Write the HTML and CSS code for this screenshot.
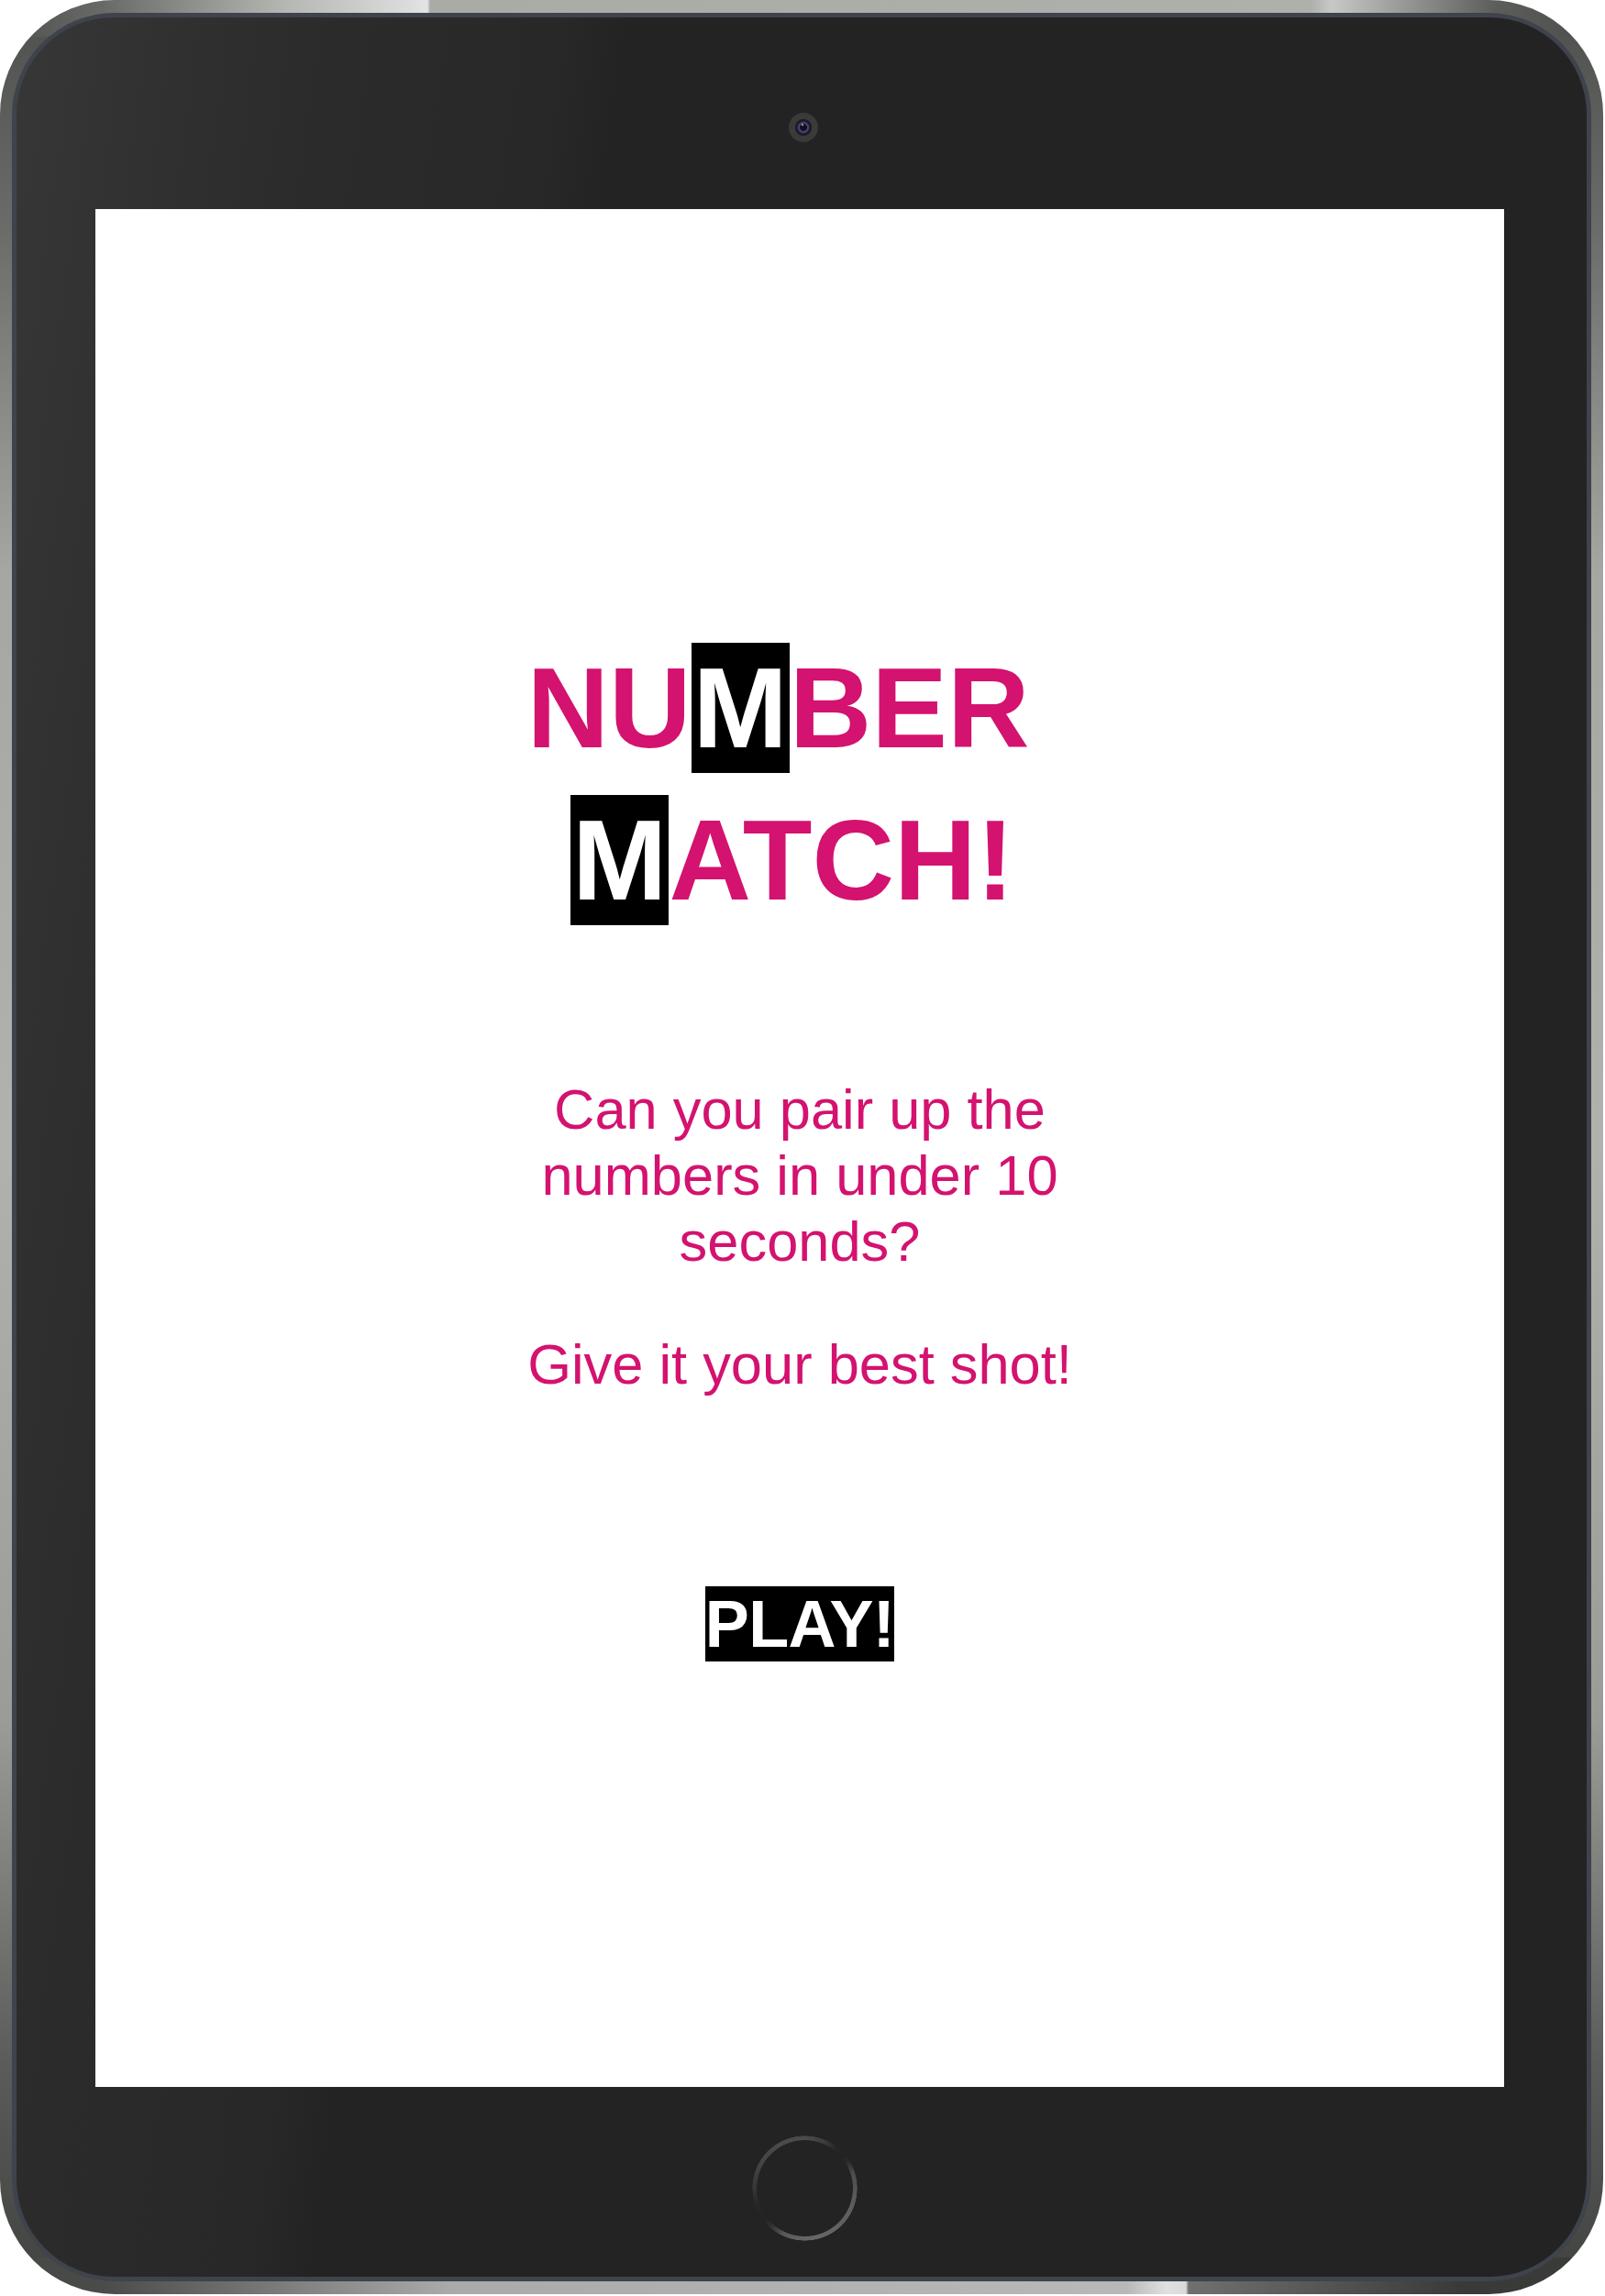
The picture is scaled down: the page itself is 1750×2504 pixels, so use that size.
FILE: index.html
```html
<!DOCTYPE html>
<html lang="en">
<head>
<meta charset="utf-8">
<title>Number Match!</title>
<link rel="stylesheet" href="styles.css">
</head>
<body>
<div class="device">
  <div class="rim">
    <div class="bezel">
      <div class="camera"></div>
      <main class="screen">
        <h1 class="title">
          <span class="title-line line-1">NU<span class="tile">M</span>BER</span>
          <span class="title-line line-2"><span class="tile">M</span>ATCH!</span>
        </h1>
        <div class="intro">
          <p>Can you pair up the numbers in under 10 seconds?</p>
          <p>Give it your best shot!</p>
        </div>
        <button class="play" type="button">PLAY!</button>
      </main>
      <div class="home"></div>
    </div>
  </div>
</div>
</body>
</html>
```
FILE: styles.css
```css
html, body {
  margin: 0;
  padding: 0;
  background: #ffffff;
}

.device {
  box-sizing: border-box;
  width: 1748px;
  height: 2502px;
  padding: 14px 13px;
  border-radius: 125px;
  background:
    linear-gradient(to right, #4e504e 0, #686a67 112px, #b5b7b3 312px, #dcdcdc 446px, #e4e4e4 466px, #a9aba7 469px, #aeb0ac 1429px, #c8c8c6 1451px, #5c5e5b 1630px, #4a4c49 100%) top / 100% 40px no-repeat,
    linear-gradient(to right, #454744 0, #4a4c49 112px, #aaaaaa 491px, #b8b8b8 1228px, #e0e0e0 1272px, #dadada 1293px, #6f716e 1296px, #383a37 1596px, #3a3c39 100%) bottom / 100% 40px no-repeat,
    linear-gradient(to bottom, #4d4f4c 0, #6a6c69 10%, #a5a7a3 25%, #b0b2ae 50%, #9a9c98 75%, #5a5c59 90%, #404240 100%);
}

.rim {
  box-sizing: border-box;
  height: 100%;
  padding: 5px;
  border-radius: 112px;
  background: #3e434c;
}

.bezel {
  box-sizing: border-box;
  height: 100%;
  border-radius: 106px;
  display: flex;
  flex-direction: column;
  align-items: center;
  background: linear-gradient(98deg, #373737 0%, #303030 9%, #2b2b2b 17%, #282828 29%, #232323 32.5%, #232323 100%);
}

.camera {
  width: 32px;
  height: 32px;
  margin-top: 104px;
  margin-left: 4px;
  border-radius: 50%;
  background:
    radial-gradient(circle at 47% 41%, rgba(190, 185, 220, 0.7) 0 1px, transparent 1.6px),
    radial-gradient(circle, #120f1c 0 3.5px, #4b3c7c 4.2px 5.6px, #2a2340 6.4px, #1c1c1e 7px 8.6px, #3a3a3a 9.6px 16px);
}

.screen {
  box-sizing: border-box;
  width: 1536px;
  height: 2048px;
  margin-top: 73px;
  margin-right: 4px;
  background: #ffffff;
  display: flex;
  flex-direction: column;
  align-items: center;
  color: #d4126f;
  font-family: "Liberation Sans", Arial, sans-serif;
}

.title {
  align-self: stretch;
  margin: 461px 0 0;
  font-size: 124px;
  line-height: 166px;
  font-weight: 700;
  text-align: center;
}

.title-line {
  display: block;
}

.line-1 {
  padding-right: 47px;
}

.line-2 {
  padding-right: 16px;
}

.tile {
  background: #000000;
  color: #ffffff;
  padding: 2px 2px;
}

.intro {
  width: 640px;
  margin-top: 153px;
  font-size: 61.4px;
  line-height: 72px;
  font-weight: 400;
  text-align: center;
}

.intro p {
  margin: 0;
}

.intro p + p {
  margin-top: 62px;
}

.play {
  margin-top: 206px;
  padding: 0;
  border: 0;
  background: #000000;
  color: #ffffff;
  font-family: "Liberation Sans", Arial, sans-serif;
  font-size: 72px;
  line-height: 82px;
  font-weight: 700;
  letter-spacing: -0.6px;
  cursor: pointer;
}

.home {
  width: 115px;
  height: 115px;
  margin-top: 53px;
  margin-left: 6px;
  border-radius: 50%;
  background: conic-gradient(from 0deg,
    #4a4a4a 0deg, #3e3e3e 22deg, #262626 38deg, #232323 50deg,
    #2a2a2a 58deg, #4c4c4c 72deg, #5a5a5a 100deg, #646464 150deg,
    #666666 180deg, #585858 205deg, #333333 220deg, #232323 232deg,
    #262626 250deg, #343434 268deg, #434343 295deg, #4a4a4a 330deg, #4a4a4a 360deg);
  -webkit-mask: radial-gradient(circle, transparent 0 52px, #000 52.8px 56.8px, transparent 57.6px);
  mask: radial-gradient(circle, transparent 0 52px, #000 52.8px 56.8px, transparent 57.6px);
}
```
